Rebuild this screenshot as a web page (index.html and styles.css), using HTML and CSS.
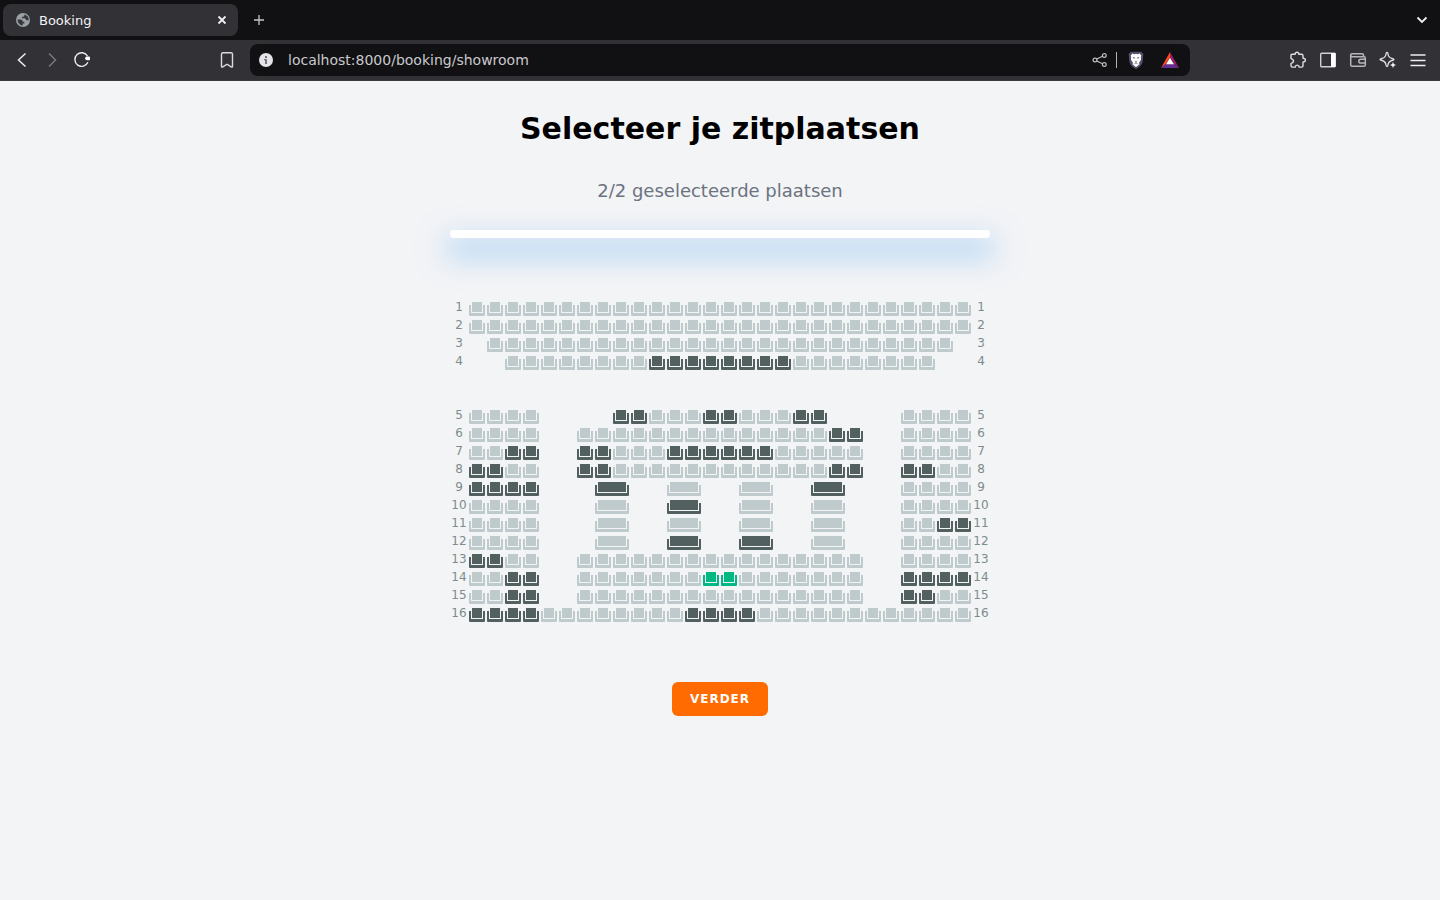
FILE: index.html
```html
<!DOCTYPE html>
<html lang="nl">
<head>
<meta charset="utf-8">
<title>Booking</title>
<link rel="stylesheet" href="styles.css">
</head>
<body>
<header class="browser">
  <div class="tabs">
    <div class="tab">
      <svg class="icon" width="16" height="16" viewBox="0 0 16 16"><circle cx="8" cy="8" r="7" fill="#9aa0a6"/><path d="M2.400 7.600h3.400q2 .3 1.900 2.200h1.600v1.800H7.600v2.200Q3.200 13.200 2.400 7.600Z M9.300 2.600v1.200q0 .9-1 .9H6.900v1.500h2.700q1.300.1 1.400 1.700l2.600.5q.7-4-4.300-5.800Z" fill="#36363b"/></svg>
      <span class="tab-title">Booking</span>
      <button class="icon-btn" aria-label="Sluit tabblad"><svg width="16" height="16" viewBox="0 0 16 16"><path d="m4.500 4.500 7 7m0-7-7 7" stroke="#f0f0f3" stroke-width="1.800" fill="none"/></svg></button>
    </div>
    <button class="icon-btn" aria-label="Nieuw tabblad"><svg width="16" height="16" viewBox="0 0 16 16"><path d="M8 3v10M3 8h10" stroke="#c6c6ca" stroke-width="1.300"/></svg></button>
    <button class="icon-btn tabs-menu" aria-label="Tabbladen"><svg width="16" height="16" viewBox="0 0 16 16"><path d="m3.500 5.500 4.500 4.500 4.500-4.500" stroke="#f0f0f3" stroke-width="1.800" fill="none"/></svg></button>
  </div>
  <div class="toolbar">
    <div class="tools">
      <button class="icon-btn" aria-label="Terug"><svg width="18" height="18" viewBox="0 0 18 18"><path d="m12.500 2.500-7 6.500 7 6.500" stroke="#eeeef1" stroke-width="1.500" fill="none"/></svg></button>
      <button class="icon-btn" aria-label="Vooruit"><svg width="18" height="18" viewBox="0 0 18 18"><path d="m6 2.500 6.500 6.500-6.500 6.500" stroke="#77777c" stroke-width="1.500" fill="none"/></svg></button>
      <button class="icon-btn" aria-label="Vernieuwen"><svg width="18" height="18" viewBox="0 0 18 18"><path d="M14.500 5A6.800 6.800 0 1 0 14.900 11.300" stroke="#eeeef1" stroke-width="1.400" fill="none"/><path d="M13 5.500h3.200q.8 0 .8.800v2.200q0 .7-.8.700h-2.100q-2-.4-2.200-1.600Z" fill="#fff"/></svg></button>
    </div>
    <button class="icon-btn" aria-label="Bladwijzer"><svg width="18" height="18" viewBox="0 0 18 18"><path d="M3.500 3.300q0-1.600 1.600-1.600h7.800q1.600 0 1.600 1.600v11.900q0 1.400-1.300.6L9 13.200l-4.200 2.600q-1.300.8-1.300-.6Z" stroke="#dcdce0" stroke-width="1.400" fill="none"/></svg></button>
    <div class="address">
      <svg class="icon" width="16" height="16" viewBox="0 0 16 16"><circle cx="8" cy="8" r="7" fill="#e4e4e9"/><path d="M7 4h2v2H7zM6 7h3v5H7V8.300H6z" fill="#77777d"/></svg>
      <label class="hidden" for="url">Adres</label>
      <input class="url" id="url" type="text" value="localhost:8000/booking/showroom">
      <button class="icon-btn" aria-label="Delen"><svg width="16" height="16" viewBox="0 0 16 16"><g stroke="#bcbcc1" stroke-width="1.200" fill="none"><path d="m4.800 7 5.700-2.800M4.800 9l5.700 2.800"/><circle cx="3" cy="8" r="1.900"/><circle cx="12.300" cy="3.500" r="1.900"/><circle cx="12.300" cy="12.500" r="1.900"/></g></svg></button>
      <span class="divider"></span>
      <button class="icon-btn shield" aria-label="Shields"><svg width="18" height="20" viewBox="0 0 18 20"><path d="M3.800 1.700h10.400l2.100 2.200-.7 8Q14.600 16 9 19 3.400 16 2.400 11.900l-.7-8Z" fill="#52526a"/><path d="m5.500 3.600 2 .6L9 3.800l1.500.4 2-.6 1.800 2-.4 2.200.2 1.600-2 3.300.3 1.700L9 17l-3.400-2.600.3-1.700-2-3.300.2-1.600-.4-2.200Z" fill="#fff"/><path d="m5.500 7 2.300.6-.6 1.300ZM12.500 7l-2.300.6.6 1.300ZM7.600 11.800 9 11.200l1.400.6-1.400 1Z" fill="#52526a"/><path d="M6.700 14.200 9 13.200l2.300 1" stroke="#8c8c9e" stroke-width=".8" fill="none"/></svg></button>
      <button class="icon-btn rewards" aria-label="Rewards"><svg width="20" height="18" viewBox="0 0 20 18"><path d="M10 1v5.500L5.800 13 1 17Z" fill="#ff4724"/><path d="m10 1 9 16-4.800-4L10 6.500Z" fill="#9e1f63"/><path d="m1 17 4.800-4h8.400l4.800 4Z" fill="#662d91"/><path d="m10 6.800 4 6.500H6Z" fill="#fff"/></svg></button>
    </div>
    <div class="tools tools-end">
      <button class="icon-btn" aria-label="Extensies"><svg width="18" height="18" viewBox="0 0 18 18"><path d="M3 3.300h3.200Q6.200 1.300 8 1.300t1.800 2h2.700q1.500 0 1.500 1.500v2.400q2.400 0 2.400 1.900T14 11v3.700q0 1.400-1.400 1.400h-2.400q-.2-2-2-2t-2 2H3.400Q2 16.100 2 14.700v-2.300q2.500-.4 2.500-2.300T2 7.600V4.300q0-1 1-1Z" stroke="#dedee2" stroke-width="1.400" stroke-linejoin="round" fill="none"/></svg></button>
      <button class="icon-btn" aria-label="Zijbalk"><svg width="18" height="18" viewBox="0 0 18 18"><rect x="1.700" y="2.200" width="14.600" height="13.600" rx="1" stroke="#cfcfd4" stroke-width="1.400" fill="none"/><path d="M12 2h4.500v14H12z" fill="#fff"/></svg></button>
      <button class="icon-btn" aria-label="Wallet"><svg width="18" height="18" viewBox="0 0 18 18"><g stroke="#b5b5ba" stroke-width="1.500" fill="none"><path d="M14.500 5.500V4q0-1.300-1.500-1.300H3Q1.700 2.700 1.700 4v10q0 1.300 1.300 1.300h12q1.300 0 1.300-1.300V7q0-1.300-1.300-1.300H3.500Q2 5.700 2 4.500"/><path d="M16 8.300h-4.200q-2 0-2 1.900t2 1.900H16"/></g></svg></button>
      <button class="icon-btn" aria-label="Leo"><svg width="18" height="18" viewBox="0 0 18 18"><path d="M8 1.500q.8 0 1 1.500Q9.400 6.600 13 7.500q2 .5 2 1t-2 1Q9.400 10.400 9 14q-.2 1.500-1 1.500T7 14Q6.600 10.400 3 9.500q-2-.5-2-1t2-1Q6.600 6.600 7 3q.2-1.500 1-1.500Z" stroke="#e2e2e6" stroke-width="1.300" fill="none"/><path d="m14 11 .9 2.100L17 14l-2.100.9L14 17l-.9-2.100L11 14l2.100-.9Z" fill="#eeeef1"/></svg></button>
      <button class="icon-btn" aria-label="Menu"><svg width="18" height="18" viewBox="0 0 18 18"><path d="M1.500 4h15M1.500 9.500h15M1.500 14.500h15" stroke="#eeeef1" stroke-width="1.400"/></svg></button>
    </div>
  </div>
</header>
<main class="page">
  <h1 class="title">Selecteer je zitplaatsen</h1>
  <p class="count">2/2 geselecteerde plaatsen</p>
  <div class="screen"></div>
  <div class="hall" id="hall"></div>
  <button class="next">VERDER</button>
</main>
<script src="seats.js"></script>
</body>
</html>
```
FILE: styles.css
```css
* { box-sizing: border-box; }
body {
  margin: 0;
  min-height: 100vh;
  background: #f3f4f6;
  font-family: "DejaVu Sans", sans-serif;
}
button { border: 0; padding: 0; background: none; font: inherit; cursor: pointer; }
svg { display: block; flex: none; }
.hidden { display: none; }

.browser { background: #323136; }
.tabs {
  display: flex;
  align-items: center;
  height: 40px;
  padding: 0 10px 0 3px;
  background: #111113;
}
.tab {
  display: flex;
  align-items: center;
  width: 235px;
  height: 32px;
  margin-right: 9px;
  padding: 0 4px 0 12px;
  border-radius: 8px;
  background: #323136;
}
.tab-title { flex: 1; margin-left: 8px; font-size: 13px; color: #f4f4f6; }
.icon-btn {
  display: flex;
  flex: none;
  align-items: center;
  justify-content: center;
  width: 24px;
  height: 24px;
}
.tabs-menu { margin-left: auto; margin-right: -4px; }
.toolbar {
  display: flex;
  align-items: center;
  height: 41px;
  padding: 0 10px;
  border-bottom: 1px solid #3a3a3f;
}
.tools { display: flex; gap: 6px; margin-right: 121px; }
.address {
  display: flex;
  flex: 1;
  align-items: center;
  height: 32px;
  margin: 0 96px 0 11px;
  padding: 0 8px;
  border-radius: 8px;
  background: #111113;
}
.url {
  flex: 1;
  min-width: 0;
  margin-left: 14px;
  padding: 0;
  border: 0;
  outline: 0;
  background: none;
  color: #c9c9ce;
  font: 14px "DejaVu Sans", sans-serif;
}
.divider { width: 1px; height: 16px; margin: 0 7px 0 4px; background: #b0b0b5; }
.rewards { margin-left: 10px; }
.tools-end { margin-right: 0; }

.page { display: flex; flex-direction: column; align-items: center; padding: 30px 16px; }
.title { margin: 0; font-size: 30px; line-height: 36px; color: #000; }
.count { margin: 30px 0 25px; font-size: 18px; line-height: 28px; color: #6b7280; }
.screen {
  width: 100%;
  max-width: 540px;
  height: 8px;
  border-radius: 4px;
  background: #fff;
  box-shadow: 0 14px 28px 6px rgba(130, 187, 243, 0.55);
}
.hall {
  display: grid;
  grid-template-columns: repeat(30, 18px);
  grid-auto-rows: 18px;
  margin: 60px 0;
}
.row-label {
  font-size: 12px;
  line-height: 18px;
  text-align: center;
  color: #7b8c8b;
}
.seat {
  height: 14px;
  margin: 4px 1px 0;
  border-radius: 1px;
  color: #bfcacc;
  background:
    linear-gradient(currentColor, currentColor) center top / calc(100% - 6px) 10px no-repeat,
    linear-gradient(currentColor, currentColor) left bottom / 2px 11px no-repeat,
    linear-gradient(currentColor, currentColor) right bottom / 2px 11px no-repeat,
    linear-gradient(currentColor, currentColor) left bottom / 100% 3px no-repeat;
}
.seat-wide { grid-column-end: span 2; }
.seat-taken { color: #536060; }
.seat-selected { color: #00b884; }
.next {
  height: 34px;
  padding: 0 18px;
  border-radius: 6px;
  background: #ff6b00;
  color: #fff;
  font-size: 12px;
  font-weight: 700;
  letter-spacing: 1px;
}
```
FILE: seats.js
```js
// o = free, x = taken, s = selected, O / X = double seat, . = aisle
const rows = [
  "oooooooooooooooooooooooooooo",
  "oooooooooooooooooooooooooooo",
  ".oooooooooooooooooooooooooo.",
  "..ooooooooxxxxxxxxoooooooo..",
  "oooo....xxoooxxoooxx....oooo",
  "oooo..ooooooooooooooxx..oooo",
  "ooxx..xxoooxxxxxxooooo..oooo",
  "xxoo..xxooooooooooooxx..xxoo",
  "xxxx...X...O...O...X....oooo",
  "oooo...O...X...O...O....oooo",
  "oooo...O...O...O...O....ooxx",
  "oooo...O...X...X...O....oooo",
  "xxoo..oooooooooooooooo..oooo",
  "ooxx..ooooooossooooooo..xxxx",
  "ooxx..oooooooooooooooo..xxoo",
  "xxxxooooooooxxxxoooooooooooo"
];
const hall = document.getElementById("hall");

function place(element, row, column) {
  element.style.gridRowStart = row;
  element.style.gridColumnStart = column;
  hall.append(element);
}

function addLabel(text, row, column) {
  const label = document.createElement("span");
  label.className = "row-label";
  label.textContent = text;
  place(label, row, column);
}

rows.forEach((seats, index) => {
  const number = index + 1;
  const line = number > 4 ? number + 2 : number;
  addLabel(number, line, 1);
  [...seats].forEach((type, i) => {
    if (type === ".") return;
    const seat = document.createElement("button");
    const kind = type.toLowerCase();
    seat.className = "seat";
    if (type !== kind) seat.classList.add("seat-wide");
    if (kind === "x") {
      seat.classList.add("seat-taken");
      seat.disabled = true;
    }
    if (kind === "s") seat.classList.add("seat-selected");
    seat.setAttribute("aria-label", `Rij ${number}, stoel ${i + 1}`);
    place(seat, line, i + 2);
  });
  addLabel(number, line, 30);
});
```
